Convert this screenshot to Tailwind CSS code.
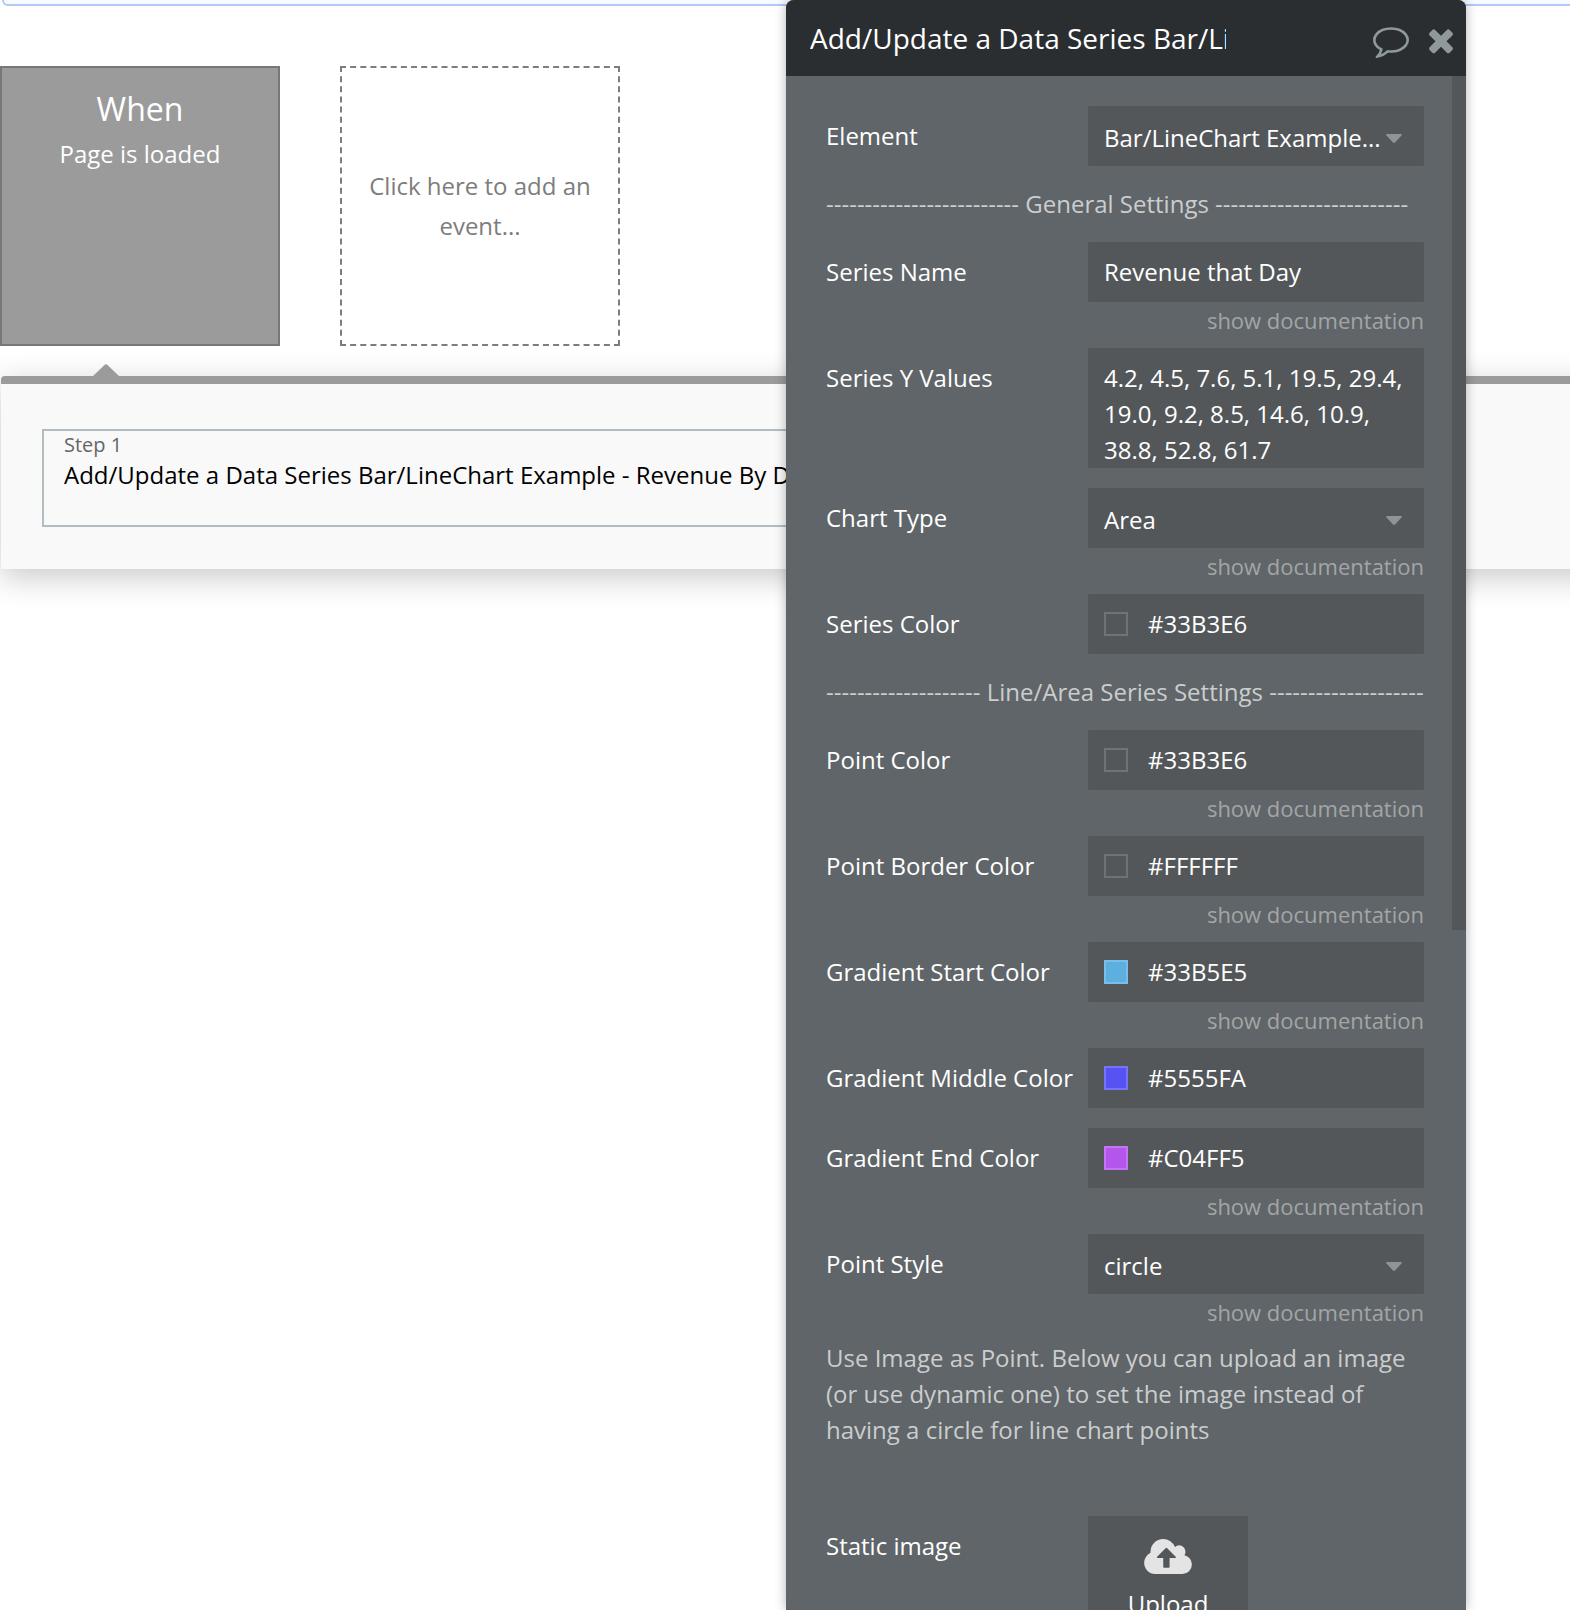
<!DOCTYPE html>
<html lang="en">
<head>
<meta charset="utf-8">
<title>Workflow editor</title>
<script src="https://cdn.jsdelivr.net/npm/@tailwindcss/browser@4"></script>
</head>
<body class="relative h-screen overflow-hidden bg-white font-['Open_Sans',sans-serif] text-2xl text-black">

<main>
  <div class="ml-0.5 h-1.5 rounded-bl-lg border-b-2 border-l-2 border-[#b0c9f5] bg-[#f7faff]"></div>

  <section class="mt-[60px] flex gap-[60px]" aria-label="Events">
    <button type="button" class="flex size-[280px] flex-col items-center border-2 border-[#777] bg-[#9b9b9b] pt-[17px] text-white">
      <span class="text-[32px] leading-[48px]">When</span>
      <span class="leading-[42px]">Page is loaded</span>
    </button>
    <button type="button" class="size-[280px] border-2 border-dashed border-[#7d7d7d] px-5 leading-10 text-[#7d7d7d]">Click here to add an event...</button>
  </section>

  <section class="mt-[18px]" aria-label="Actions">
    <svg class="relative z-10 ml-[93px] block h-3 w-[26px] fill-[#9b9b9b]" viewBox="0 0 26 12" aria-hidden="true"><path d="M0 12 11.500 1q1.500-1.500 3 0L26 12z"/></svg>
    <div class="-mr-10 ml-px rounded-t border-t-8 border-[#9b9b9b] bg-[#f9f9f9] px-[41px] pt-[45px] pb-[42px] shadow-[0_8px_32px_rgba(0,0,0,0.22)]">
      <div class="h-[98px] max-w-[960px] border-2 border-[#b3bcc1] px-5">
        <p class="text-xl leading-7 text-[#666]">Step 1</p>
        <p class="whitespace-nowrap leading-8">Add/Update a Data Series Bar/LineChart Example - Revenue By Day</p>
      </div>
    </div>
  </section>
</main>

<aside class="absolute inset-y-0 right-[104px] z-20 w-[680px] overflow-hidden rounded-t-lg bg-[#5f6568] text-white shadow-[0_0_12px_rgba(0,0,0,0.3)]">
  <header class="flex h-[76px] items-center bg-[#2a2e31] pr-[7px] pl-6">
    <h2 class="w-[416px] overflow-hidden text-[28px] leading-10 whitespace-nowrap">Add/Update a Data Series Bar/LineChart Example</h2>
    <div class="mt-1 ml-auto flex gap-3.5 fill-[#8f999c]">
      <button type="button" aria-label="Comment"><svg class="block size-9" viewBox="0 0 1792 1792"><path d="M896 384q-204 0-381.500 69.500t-282 187.500-104.500 255q0 112 71.500 213.500t201.500 175.500l87 50-27 96q-24 91-70 172 152-63 275-171l43-38 57 6q69 8 130 8 204 0 381.500-69.500t282-187.500 104.500-255-104.500-255-282-187.500-381.500-69.500zm896 512q0 174-120 321.500t-326 233-450 85.500q-70 0-145-8-198 175-460 242-49 14-114 22h-5q-15 0-27-10.500t-16-27.500v-1q-3-4-.5-12t2-10 4.500-9.500l6-9 7-8.500 8-9q7-8 31-34.500t34.500-38 31-39.500 32.500-51 27-59 26-76q-157-89-247.500-220t-90.500-281q0-174 120-321.500t326-233 450-85.500 450 85.500 326 233 120 321.500z"/></svg></button>
      <button type="button" aria-label="Close"><svg class="block size-9" viewBox="0 0 1792 1792"><path d="M1490 1322q0 40-28 68l-136 136q-28 28-68 28t-68-28l-294-294-294 294q-28 28-68 28t-68-28l-136-136q-28-28-28-68t28-68l294-294-294-294q-28-28-28-68t28-68l136-136q28-28 68-28t68 28l294 294 294-294q28-28 68-28t68 28l136 136q28 28 28 68t-28 68l-294 294 294 294q28 28 28 68z"/></svg></button>
    </div>
  </header>
  <div class="absolute top-[76px] right-0 h-[854px] w-3.5 bg-[#53575a]"></div>

  <form class="pt-[30px] pr-[42px] pl-10">
    <div class="grid grid-cols-[262px_1fr] pb-5">
      <label for="element" class="leading-[60px]">Element</label>
      <div class="relative">
        <select id="element" class="block h-[60px] w-full appearance-none rounded-xs bg-[#53575a] pt-1 pl-4"><option>Bar/LineChart Example...</option></select>
        <svg class="pointer-events-none absolute top-7 right-[22px] h-[9px] w-4 fill-[#8f9496]" viewBox="0 0 16 9"><path d="M1 0h14q1.500.2.500 1.500L9 8.500q-1 .8-2 0L.5 1.500Q-.5.2 1 0z"/></svg>
      </div>
    </div>

    <p class="pb-5 leading-9 whitespace-nowrap text-[#cbcdce]">------------------------- General Settings -------------------------</p>

    <div class="grid grid-cols-[262px_1fr] pb-2.5">
      <label for="name" class="leading-[60px]">Series Name</label>
      <div class="flex h-[60px] items-center rounded-xs bg-[#53575a] px-4">
        <input id="name" type="text" value="Revenue that Day" class="w-full min-w-0 bg-transparent">
      </div>
      <a href="#" class="col-start-2 text-right text-[22px] leading-9 text-[#a3a5a6]">show documentation</a>
    </div>

    <div class="grid grid-cols-[262px_1fr] pb-5">
      <label for="values" class="leading-[60px]">Series Y Values</label>
      <textarea id="values" class="block h-[120px] w-full resize-none overflow-hidden rounded-xs bg-[#53575a] px-4 pt-3 leading-9">4.2, 4.5, 7.6, 5.1, 19.5, 29.4, 19.0, 9.2, 8.5, 14.6, 10.9, 38.8, 52.8, 61.7</textarea>
    </div>

    <div class="grid grid-cols-[262px_1fr] pb-2.5">
      <label for="type" class="leading-[60px]">Chart Type</label>
      <div class="relative">
        <select id="type" class="block h-[60px] w-full appearance-none rounded-xs bg-[#53575a] pt-1 pl-4"><option>Area</option></select>
        <svg class="pointer-events-none absolute top-7 right-[22px] h-[9px] w-4 fill-[#8f9496]" viewBox="0 0 16 9"><path d="M1 0h14q1.500.2.500 1.500L9 8.500q-1 .8-2 0L.5 1.500Q-.5.2 1 0z"/></svg>
      </div>
      <a href="#" class="col-start-2 text-right text-[22px] leading-9 text-[#a3a5a6]">show documentation</a>
    </div>

    <div class="grid grid-cols-[262px_1fr] pb-5">
      <label for="series-color" class="leading-[60px]">Series Color</label>
      <div class="flex h-[60px] items-center gap-5 rounded-xs bg-[#53575a] px-4">
        <span class="size-6 shrink-0 border-2 border-[#6f7375]"></span>
        <input id="series-color" type="text" value="#33B3E6" class="w-full min-w-0 bg-transparent">
      </div>
    </div>

    <p class="pb-5 leading-9 whitespace-nowrap text-[#cbcdce]">-------------------- Line/Area Series Settings --------------------</p>

    <div class="grid grid-cols-[262px_1fr] pb-2.5">
      <label for="point-color" class="leading-[60px]">Point Color</label>
      <div class="flex h-[60px] items-center gap-5 rounded-xs bg-[#53575a] px-4">
        <span class="size-6 shrink-0 border-2 border-[#6f7375]"></span>
        <input id="point-color" type="text" value="#33B3E6" class="w-full min-w-0 bg-transparent">
      </div>
      <a href="#" class="col-start-2 text-right text-[22px] leading-9 text-[#a3a5a6]">show documentation</a>
    </div>

    <div class="grid grid-cols-[262px_1fr] pb-2.5">
      <label for="point-border" class="leading-[60px]">Point Border Color</label>
      <div class="flex h-[60px] items-center gap-5 rounded-xs bg-[#53575a] px-4">
        <span class="size-6 shrink-0 border-2 border-[#6f7375]"></span>
        <input id="point-border" type="text" value="#FFFFFF" class="w-full min-w-0 bg-transparent">
      </div>
      <a href="#" class="col-start-2 text-right text-[22px] leading-9 text-[#a3a5a6]">show documentation</a>
    </div>

    <div class="grid grid-cols-[262px_1fr] pb-2.5">
      <label for="grad-start" class="leading-[60px]">Gradient Start Color</label>
      <div class="flex h-[60px] items-center gap-5 rounded-xs bg-[#53575a] px-4">
        <span class="size-6 shrink-0 border-2 border-[#77bfe8] bg-[#5cb0df]"></span>
        <input id="grad-start" type="text" value="#33B5E5" class="w-full min-w-0 bg-transparent">
      </div>
      <a href="#" class="col-start-2 text-right text-[22px] leading-9 text-[#a3a5a6]">show documentation</a>
    </div>

    <div class="grid grid-cols-[262px_1fr] pb-5">
      <label for="grad-mid" class="leading-[60px] whitespace-nowrap">Gradient Middle Color</label>
      <div class="flex h-[60px] items-center gap-5 rounded-xs bg-[#53575a] px-4">
        <span class="size-6 shrink-0 border-2 border-[#7674f8] bg-[#5653f2]"></span>
        <input id="grad-mid" type="text" value="#5555FA" class="w-full min-w-0 bg-transparent">
      </div>
    </div>

    <div class="grid grid-cols-[262px_1fr] pb-2.5">
      <label for="grad-end" class="leading-[60px]">Gradient End Color</label>
      <div class="flex h-[60px] items-center gap-5 rounded-xs bg-[#53575a] px-4">
        <span class="size-6 shrink-0 border-2 border-[#c474f6] bg-[#b455ec]"></span>
        <input id="grad-end" type="text" value="#C04FF5" class="w-full min-w-0 bg-transparent">
      </div>
      <a href="#" class="col-start-2 text-right text-[22px] leading-9 text-[#a3a5a6]">show documentation</a>
    </div>

    <div class="grid grid-cols-[262px_1fr] pb-2.5">
      <label for="point-style" class="leading-[60px]">Point Style</label>
      <div class="relative">
        <select id="point-style" class="block h-[60px] w-full appearance-none rounded-xs bg-[#53575a] pt-1 pl-4"><option>circle</option></select>
        <svg class="pointer-events-none absolute top-7 right-[22px] h-[9px] w-4 fill-[#8f9496]" viewBox="0 0 16 9"><path d="M1 0h14q1.500.2.500 1.500L9 8.500q-1 .8-2 0L.5 1.500Q-.5.2 1 0z"/></svg>
      </div>
      <a href="#" class="col-start-2 text-right text-[22px] leading-9 text-[#a3a5a6]">show documentation</a>
    </div>

    <p class="leading-9 text-[#cbcdce]">Use Image as Point. Below you can upload an image (or use dynamic one) to set the image instead of having a circle for line chart points</p>

    <div class="mt-[68px] grid grid-cols-[262px_1fr]">
      <label for="upload" class="leading-[60px]">Static image</label>
      <button id="upload" type="button" class="flex h-40 w-40 flex-col items-center bg-[#53575a] pt-[23px]">
        <svg class="h-[35px] w-12 fill-[#e4e4e4]" viewBox="0 128 1920 1408" aria-hidden="true"><path d="M1280 864q0-14-9-23L919 489q-9-9-23-9t-23 9L522 840q-10 12-10 24 0 14 9 23t23 9h224v352q0 13 9.500 22.500t22.500 9.500h192q13 0 22.500-9.500t9.500-22.500V896h224q13 0 22.500-9.500t9.500-22.500zm640 288q0 159-112.500 271.500T1536 1536H448q-185 0-316.500-131.500T0 1088q0-130 70-240t188-165q-2-30-2-43 0-212 150-362t362-150q156 0 285.500 87t188.500 231q71-62 166-62 106 0 181 75t75 181q0 76-41 138 130 31 213.500 135.500t83.500 238.500z"/></svg>
        <span class="mt-3 leading-9">Upload</span>
      </button>
    </div>
  </form>
</aside>

</body>
</html>
